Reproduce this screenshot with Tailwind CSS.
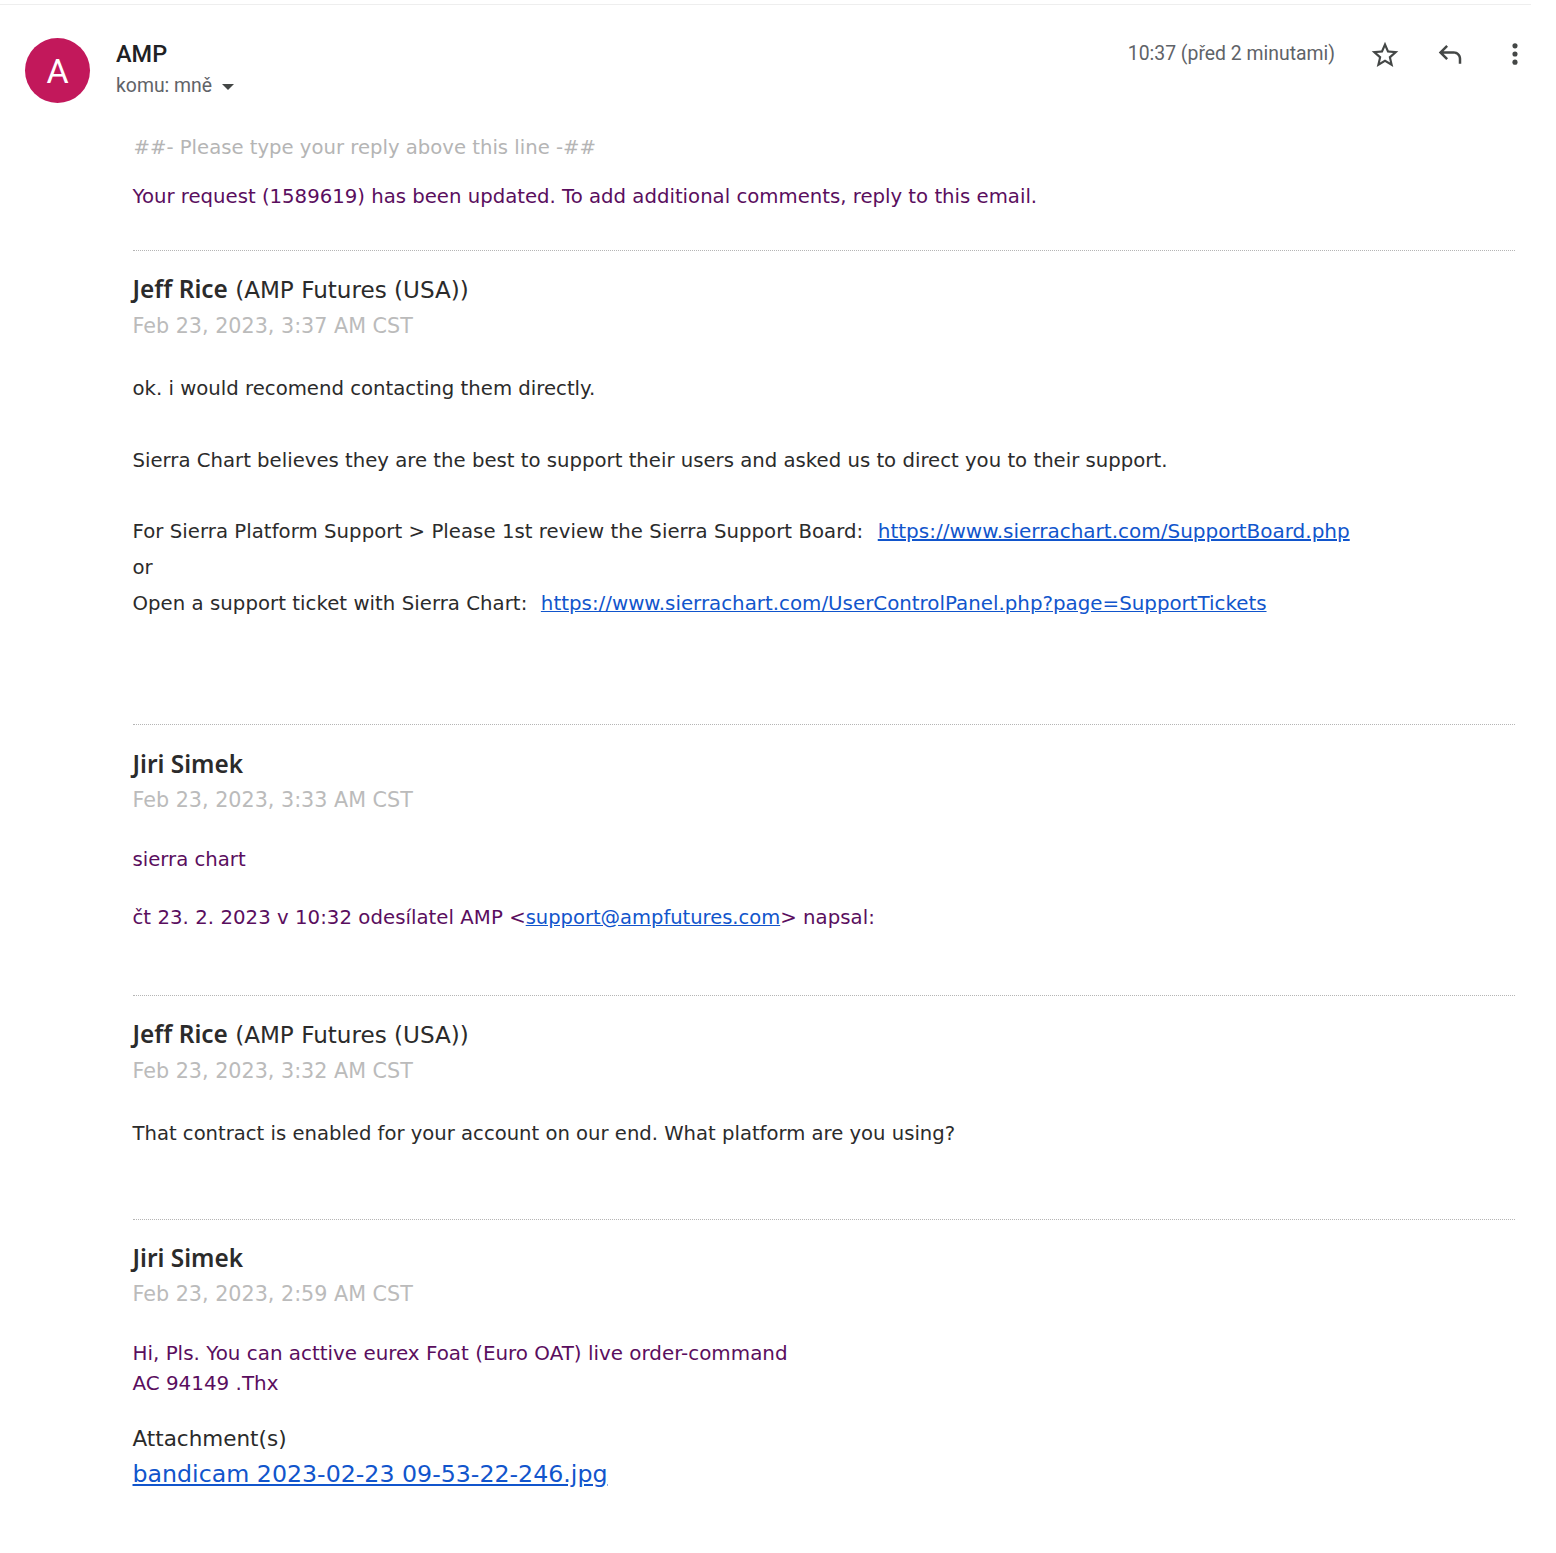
<!DOCTYPE html>
<html lang="en">
<head>
    <meta charset="UTF-8">
    <title>AMP</title>
    <script src="https://cdn.jsdelivr.net/npm/@tailwindcss/browser@4"></script>
</head>
<body class="bg-white font-['DejaVu_Sans',sans-serif] text-[19.7px] text-[#2b2b2b]">
    <div class="w-[1531px] h-[5px] border-b border-[#eeeeee]"></div>

    <!-- message header -->
    <header class="flex h-[105px] pl-[25px] pt-[33px]">
        <div class="flex size-[65px] items-center justify-center rounded-full bg-[#c2185b] pt-[2px] font-['Roboto',sans-serif] text-[34px] text-white">A</div>
        <div class="ml-[26px] font-['Roboto',sans-serif]">
            <div class="text-[23.5px] leading-[32px] font-medium text-[#202124]">AMP</div>
            <div class="flex items-center text-[19.4px] leading-[32px] text-[#5f6368]">
                komu: mně
                <svg class="ml-[9px] mt-[2px]" width="14" height="8" viewBox="0 0 14 8"><path d="M1 1h12L7 7z" fill="#444746"/></svg>
            </div>
        </div>
        <div class="ml-auto flex h-[32px] items-center font-['Roboto',sans-serif] text-[19.4px] text-[#5f6368]">
            <span class="-mt-[1px]">10:37 (před 2 minutami)</span>
            <svg class="ml-[34px] mt-[2px]" width="32" height="32" viewBox="0 0 24 24" fill="#444746"><path d="M22 9.24l-7.19-.62L12 2 9.19 8.63 2 9.24l5.46 4.73L5.82 21 12 17.27 18.18 21l-1.63-7.03L22 9.24zM12 15.4l-3.76 2.27 1-4.28-3.32-2.88 4.38-.38L12 6.1l1.71 4.04 4.38.38-3.32 2.88 1 4.28L12 15.4z"/></svg>
            <svg class="ml-[34px] mt-[2px]" width="30" height="30" viewBox="0 0 24 24" fill="#444746"><path d="M21 19h-2v-4c0-2.21-1.79-4-4-4H6.83l3.58 3.59L9 16l-6-6 6-6 1.41 1.41L6.83 9H15c3.31 0 6 2.69 6 6v4z"/></svg>
            <svg class="ml-[36px] mr-[27px]" width="28" height="28" viewBox="0 0 24 24" fill="#444746"><circle cx="12" cy="5" r="2.2"/><circle cx="12" cy="12" r="2.2"/><circle cx="12" cy="19" r="2.2"/></svg>
        </div>
    </header>

    <main class="ml-[132.5px] w-[1382.5px]">
        <p class="pl-[1px] pt-[23px] text-[19.65px] leading-[30px] text-[#b5b5b5]">##- Please type your reply above this line -##</p>
        <p class="mt-[19px] leading-[30px] text-[#5a0e5e]">Your request (1589619) has been updated. To add additional comments, reply to this email.</p>

        <section class="mt-[38px] h-[474px] border-t border-dotted border-[#b5b5b5] pt-[20px]">
            <div class="text-[23.1px] leading-[36px]"><b class="font-['Noto_Sans',sans-serif] text-[24.4px] font-semibold">Jeff Rice</b> (AMP Futures (USA))</div>
            <div class="text-[20.7px] leading-[36px] text-[#bbbbbb]">Feb 23, 2023, 3:37 AM CST</div>
            <div class="mt-[27px] leading-[35.8px]">
                ok. i would recomend contacting them directly.<br><br>
                Sierra Chart believes they are the best to support their users and asked us to direct you to their support.<br><br>
                <span class="tracking-[0.05px]">For Sierra Platform Support &gt; Please 1st review the Sierra Support Board:</span>&nbsp;&nbsp;<a href="#" class="ml-[2px] text-[20px] text-[#1155cc] underline">https://www.sierrachart.com/SupportBoard.php</a><br>
                or<br>
                <span class="tracking-[0.05px]">Open a support ticket with Sierra Chart:</span>&nbsp;&nbsp;<a href="#" class="ml-[1px] text-[19.83px] text-[#1155cc] underline">https://www.sierrachart.com/UserControlPanel.php?page=SupportTickets</a>
            </div>
        </section>

        <section class="h-[271px] border-t border-dotted border-[#b5b5b5] pt-[21px]">
            <div class="font-['Noto_Sans',sans-serif] text-[24.4px] leading-[36px] font-semibold">Jiri Simek</div>
            <div class="text-[20.7px] leading-[36px] text-[#bbbbbb]">Feb 23, 2023, 3:33 AM CST</div>
            <p class="mt-[27px] leading-[30px] text-[#5a0e5e]">sierra chart</p>
            <p class="mt-[28px] leading-[30px] tracking-[0.05px] text-[#5a0e5e]">čt 23. 2. 2023 v 10:32 odesílatel AMP &lt;<a href="#" class="text-[19.5px] tracking-normal text-[#1155cc] underline">support@ampfutures.com</a>&gt; napsal:</p>
        </section>

        <section class="h-[224px] border-t border-dotted border-[#b5b5b5] pt-[20px]">
            <div class="text-[23.1px] leading-[36px]"><b class="font-['Noto_Sans',sans-serif] text-[24.4px] font-semibold">Jeff Rice</b> (AMP Futures (USA))</div>
            <div class="text-[20.7px] leading-[36px] text-[#bbbbbb]">Feb 23, 2023, 3:32 AM CST</div>
            <p class="mt-[27px] text-[19.63px] leading-[36px]">That contract is enabled for your account on our end. What platform are you using?</p>
        </section>

        <section class="border-t border-dotted border-[#b5b5b5] pt-[20px]">
            <div class="font-['Noto_Sans',sans-serif] text-[24.4px] leading-[36px] font-semibold">Jiri Simek</div>
            <div class="text-[20.7px] leading-[36px] text-[#bbbbbb]">Feb 23, 2023, 2:59 AM CST</div>
            <p class="mt-[27px] text-[19.9px] leading-[30px] text-[#5a0e5e]">Hi, Pls. You can acttive eurex Foat (Euro OAT) live order-command<br>AC 94149 .Thx</p>
            <div class="mt-[22px] text-[21.5px] leading-[36px]">Attachment(s)</div>
            <div class="-mt-[1px] leading-[36px]"><a href="#" class="text-[23.7px] text-[#1155cc] underline">bandicam 2023-02-23 09-53-22-246.jpg</a></div>
        </section>
    </main>
</body>
</html>
